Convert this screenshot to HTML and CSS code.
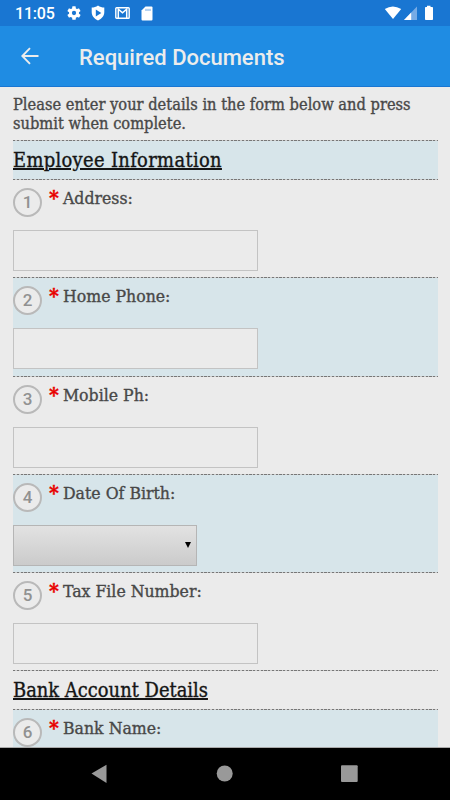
FILE: index.html
```html
<!DOCTYPE html>
<html lang="en">
<head>
<meta charset="utf-8">
<title>Required Documents</title>
<link rel="stylesheet" href="styles.css">
</head>
<body>
<div class="screen">
  <div class="status">
    <span class="time">11:05</span>
    <svg class="ico gear" viewBox="0 0 24 24"><path fill="#fff" fill-rule="evenodd" d="M19.4 13c.1-.7.1-1.300 0-2l2.100-1.600c.2-.2.3-.4.1-.7l-2-3.400c-.1-.2-.4-.3-.6-.2l-2.500 1a7 7 0 0 0-1.700-1l-.4-2.700A.5.5 0 0 0 14 2h-4a.5.5 0 0 0-.5.400l-.4 2.700c-.6.2-1.100.6-1.700 1l-2.500-1c-.2-.1-.5 0-.6.200l-2 3.400c-.1.2-.1.5.1.700L4.600 11v2l-2.200 1.600c-.2.2-.2.4-.1.700l2 3.400c.1.2.4.3.6.200l2.500-1c.5.4 1.100.8 1.700 1l.4 2.700c0 .2.2.4.5.400h4c.2 0 .4-.2.5-.4l.4-2.700c.6-.2 1.100-.6 1.700-1l2.500 1c.2.1.5 0 .6-.2l2-3.400c.1-.2.1-.5-.1-.7zM12 15.200a3.200 3.200 0 1 1 0-6.400 3.200 3.200 0 0 1 0 6.400z"/></svg>
    <svg class="ico shield" viewBox="0 0 14 16"><path fill="#fff" d="M7 .5C5 2 3 2.400.7 2.600V7c0 4 2.500 6.800 6.300 8.500 3.800-1.700 6.300-4.500 6.300-8.500V2.600C11 2.400 9 2 7 .5z"/><path fill="#1976d2" d="M4.800 4.600 10.300 8l-5.500 3.400z"/></svg>
    <svg class="ico mail" viewBox="0 0 15 12"><rect x=".8" y=".8" width="13.400" height="10.400" rx=".8" fill="none" stroke="#fff" stroke-width="1.400"/><path d="M3.300 11V2.200l4.200 3.600 4.200-3.600V11" fill="none" stroke="#fff" stroke-width="1.500"/></svg>
    <svg class="ico sd" viewBox="0 0 12 15"><path fill="#fff" d="M4.500.5H10.500a1 1 0 0 1 1 1v12a1 1 0 0 1-1 1h-9a1 1 0 0 1-1-1v-9z"/><path d="M5 2.800v2.200M7 2.800v2.200M9 2.800v2.200" stroke="#6fa6e2"/></svg>
    <svg class="signals" viewBox="0 0 52 16"><path fill="#fff" d="M.8 4Q8.700-1.200 17.200 4L9 14z"/><path fill="#76abe5" d="M33 1.500V15H20z"/><path fill="#fff" d="M27.200 7.500V15H20z"/><path fill="#fff" d="M43 .8h3.500V2h1.700q.8 0 .8.800v11.400q0 .8-.8.800h-6.400q-.8 0-.8-.8V2.800q0-.8.8-.8H43z"/></svg>
  </div>
  <header class="appbar">
    <svg class="back" viewBox="0 0 18 18"><path d="M17.500 9H1.600M9 1.200 1.300 9 9 16.800" fill="none" stroke="#ececec" stroke-width="1.900"/></svg>
    <h1>Required Documents</h1>
  </header>
  <main class="form">
    <p class="intro">Please enter your details in the form below and press<br>submit when complete.</p>
    <section class="heading tint"><h2 class="h-emp">Employee Information</h2></section>
    <section class="field"><label><span class="num">1</span><span class="req">*</span><span class="q">Address:</span></label><div class="input"></div></section>
    <section class="field tint"><label><span class="num">2</span><span class="req">*</span><span class="q">Home Phone:</span></label><div class="input"></div></section>
    <section class="field"><label><span class="num">3</span><span class="req">*</span><span class="q">Mobile Ph:</span></label><div class="input"></div></section>
    <section class="field tint"><label><span class="num">4</span><span class="req">*</span><span class="q">Date Of Birth:</span></label><div class="input select"><span class="caret"></span></div></section>
    <section class="field"><label><span class="num">5</span><span class="req">*</span><span class="q">Tax File Number:</span></label><div class="input"></div></section>
    <section class="heading"><h2>Bank Account Details</h2></section>
    <section class="field tint"><label><span class="num">6</span><span class="req">*</span><span class="q">Bank Name:</span></label><div class="input"></div></section>
  </main>
  <nav class="nav">
    <svg viewBox="0 0 450 52"><path fill="#999" d="M91.500 25.500 106.500 16.800V35z"/><circle cx="224.700" cy="25.500" r="8" fill="#999"/><rect x="341" y="17.300" width="16.700" height="16.700" rx="1" fill="#999"/></svg>
  </nav>
</div>
</body>
</html>
```
FILE: styles.css
```css
* { box-sizing: border-box; }
body { margin: 0; background: #ebebeb; }
.screen { width: 450px; height: 800px; display: flex; flex-direction: column; overflow: hidden; font-family: Roboto, sans-serif; }
.status { height: 26px; flex: none; background: #1976d2; display: flex; align-items: center; padding-left: 15px; }
.time { width: 51px; color: #fff; font-size: 16px; font-weight: 500; line-height: 26px; padding-top: 2px; letter-spacing: -0.2px; }
.ico { flex: none; display: block; }
.gear { width: 16px; height: 16px; }
.shield { width: 14px; height: 16px; margin-left: 9px; }
.mail { width: 15px; height: 12px; margin-left: 10px; }
.sd { width: 12px; height: 15px; margin-left: 11px; }
.signals { width: 52px; height: 16px; margin-left: auto; margin-right: 14px; }
.appbar { height: 61px; flex: none; background: #1f8ce3; border-bottom: 1px solid #1976d2; display: flex; align-items: center; padding-left: 21px; }
.back { width: 18px; height: 18px; margin-right: 40px; }
h1 { margin: 0; font-size: 22px; font-weight: 500; line-height: 30px; color: #ececec; padding-top: 3px; white-space: nowrap; }
.form { flex: 1; min-height: 0; overflow: hidden; padding: 8px 12px 0 13px; border-bottom: 1px solid #aaa; font-family: "DejaVu Serif Condensed", "DejaVu Serif", serif; font-stretch: condensed; }
.intro { margin: 0; height: 45px; font-size: 16.3px; line-height: 19px; color: #484848; white-space: nowrap; -webkit-text-stroke: 0.35px #484848; }
.heading, .field { background-image: repeating-linear-gradient(90deg, #777 0 2.3px, #ccc 2.3px 3.75px); background-size: 100% 1px; background-repeat: no-repeat; }
.heading { height: 39px; padding-top: 8px; }
.tint { background-color: #d7e5ea; }
h2 { margin: 0; font-size: 19.9px; line-height: 26px; font-weight: 400; color: #151515; text-decoration: underline; text-decoration-thickness: 2px; text-underline-offset: 1px; white-space: nowrap; -webkit-text-stroke: 0.35px #151515; }
.h-emp { letter-spacing: 0.33px; }
.field { height: 98.25px; padding-top: 9px; }
label { height: 42px; display: flex; align-items: flex-start; }
.num { width: 29px; height: 29px; flex: none; border: 2px solid #b9b9b9; border-radius: 50%; background: #ebebeb; color: #919191; font: 500 17px/25px Roboto, sans-serif; text-align: center; }
.req { width: 21px; flex: none; padding-left: 7px; color: #e80000; font: 700 21px/20px "DejaVu Serif Condensed", "DejaVu Serif", serif; -webkit-text-stroke: 0.4px #e80000; }
.q { font-size: 17.5px; line-height: 21px; color: #484848; white-space: nowrap; -webkit-text-stroke: 0.35px #484848; }
.input { width: 245px; height: 41px; border: 1px solid #c3c3c3; background: #ebebeb; }
.select { width: 184px; border-color: #b5b5b5; background: linear-gradient(#e2e2e2, #cbcbcb); display: flex; align-items: center; justify-content: flex-end; padding-right: 5px; }
.caret { border: 3px solid transparent; border-top: 6px solid #000; border-bottom: 0; }
.nav { height: 52px; flex: none; background: #000; }
.nav svg { display: block; width: 450px; height: 52px; }
```
